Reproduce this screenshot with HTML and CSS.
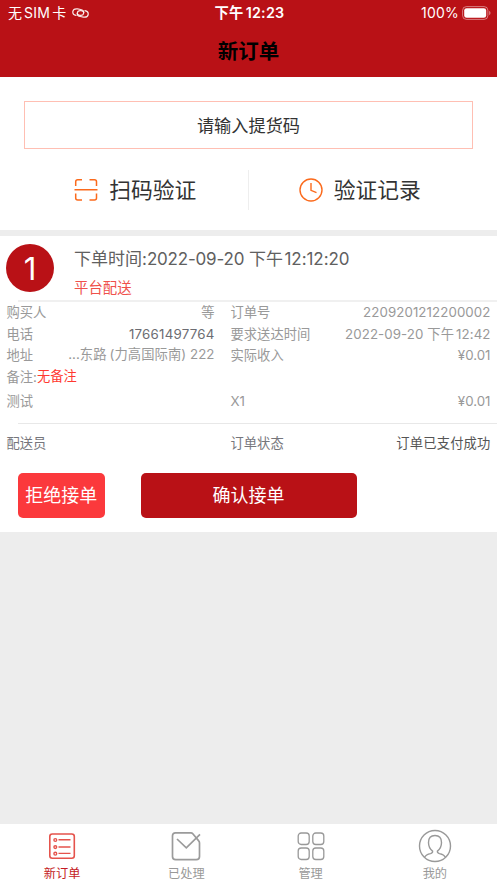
FILE: index.html
```html
<!DOCTYPE html>
<html lang="zh-CN">
<head>
<meta charset="utf-8">
<title>新订单</title>
<link rel="stylesheet" href="styles.css">
</head>
<body>
<div class="app">
  <header class="header">
    <div class="status">
      <div class="carrier"><span class="carrier-name">无<span class="sim">SIM</span>卡</span>
        <svg class="link" viewBox="0 0 17 12" fill="none" stroke="#fff" stroke-opacity=".9" stroke-width="1.200" stroke-linecap="round"><path d="M4 8.300C1.800 7.900.6 6.500.8 4.700 1.100 2.500 3.200 1.600 5.600 1.900L8.700 2.500c2.200.4 3.300 1.800 3 3.500-.3 1.800-1.900 2.600-3.900 2.300-1.500-.2-2.300-.9-2.500-1.700"/><path d="M13 3.700c2.200.4 3.400 1.800 3.200 3.600-.3 2.200-2.400 3.100-4.800 2.800L8.300 9.500C6.100 9.100 5 7.700 5.300 6c.3-1.800 1.900-2.600 3.900-2.300 1.500.2 2.300.9 2.500 1.700"/></svg>
      </div>
      <div class="time">下午<span class="clock">12:23</span></div>
      <div class="power"><span>100%</span>
        <svg class="battery" viewBox="0 0 29 14"><rect x=".6" y=".6" width="25.3" height="12.8" rx="3.8" fill="none" stroke="#fff" stroke-opacity=".45" stroke-width="1"/><rect x="2.2" y="2.2" width="22" height="9.6" rx="2.4" fill="#fff"/><path d="M27.2 4.8q1.3.8 1.3 2.2t-1.3 2.2z" fill="#fff" fill-opacity=".5"/></svg>
      </div>
    </div>
    <h1 class="title">新订单</h1>
  </header>

  <section class="verify">
    <div class="code-input">请输入提货码</div>
    <div class="actions">
      <div class="action">
        <svg class="action-icon" viewBox="0 0 24 24" fill="none" stroke="#fb6a1c" stroke-width="1.500"><path d="M1.700 8V3.700q0-2 2-2H8M15.500 1.700h5q2 0 2 2V8M1.700 15.500v4.500q0 2 2 2H8M15.500 22h5q2 0 2-2v-4.500M.5 11.700h23"/></svg>
        <span>扫码验证</span>
      </div>
      <div class="action action-log">
        <svg class="action-icon" viewBox="0 0 24 24" fill="none" stroke="#fb6a1c" stroke-width="1.400"><circle cx="12" cy="12" r="11"/><path d="M12 5v7.400l5.500 2.200"/></svg>
        <span>验证记录</span>
      </div>
    </div>
  </section>

  <article class="order">
    <div class="order-head">
      <div class="number">1</div>
      <div class="summary">
        <div class="placed">下单时间:<span class="date">2022-09-20</span> 下午<span class="clock">12:12:20</span></div>
        <div class="delivery">平台配送</div>
      </div>
    </div>
    <div class="rule thick"></div>
    <div class="details">
      <div class="col buyer">
        <div class="row"><span>购买人</span><span>等</span></div>
        <div class="row"><span>电话</span><span class="phone">17661497764</span></div>
        <div class="row"><span>地址</span><span class="address">...东路<span class="paren">(</span>力高国际南) 222</span></div>
        <div class="row note"><span>备注:</span><span class="warn">无备注</span></div>
      </div>
      <div class="col">
        <div class="row"><span>订单号</span><span class="digits">2209201212200002</span></div>
        <div class="row"><span>要求送达时间</span><span class="digits">2022-09-20 下午<span class="clock">12:42</span></span></div>
        <div class="row"><span>实际收入</span><span>¥0.01</span></div>
      </div>
    </div>
    <div class="item"><span class="left">测试</span><span>X1</span><span class="end">¥0.01</span></div>
    <div class="rule"></div>
    <div class="item courier"><span class="left">配送员</span><span>订单状态</span><span class="end dark">订单已支付成功</span></div>
    <div class="buttons">
      <button class="btn reject">拒绝接单</button>
      <button class="btn accept">确认接单</button>
    </div>
  </article>

  <nav class="tabs">
    <div class="tab active">
      <svg viewBox="0 0 34 34" fill="none" stroke="#e5534c" stroke-width="1.400"><rect x="4.800" y="5" width="24.500" height="24.200" rx="2.500" stroke-width="1.600"/><circle cx="10.300" cy="11" r="1.400"/><circle cx="10.300" cy="18.100" r="1.400"/><circle cx="10.300" cy="24.700" r="1.400"/><path d="M13.500 10.700h12M13.500 18h12M13.500 24.400h12"/></svg>
      <span>新订单</span>
    </div>
    <div class="tab">
      <svg viewBox="0 0 34 34" fill="none" stroke="#9b9b9b" stroke-width="1.700"><path d="M22 3.800H6.500q-3 0-3 3v20.700q0 3.200 3.200 3.200h20.600q3.200 0 3.200-3.200V14q0-1.200-.8-2.100L23.800 4.800q-.8-1-1.800-1z"/><path d="M8 10l9.300 8.800L31 5.300"/></svg>
      <span>已处理</span>
    </div>
    <div class="tab">
      <svg viewBox="0 0 34 34" fill="none" stroke="#999" stroke-width="1.300"><rect x="4.200" y="4" width="11" height="11.500" rx="3"/><rect x="18.800" y="4" width="11" height="11.500" rx="3"/><rect x="4.200" y="19" width="11" height="11.500" rx="3"/><rect x="18.800" y="19" width="11" height="11.500" rx="3"/></svg>
      <span>管理</span>
    </div>
    <div class="tab">
      <svg viewBox="0 0 34 34" fill="none" stroke="#999" stroke-width="1.400"><circle cx="17" cy="17" r="15.500"/><path d="M6.500 28.300c1.200-2.300 3.500-3.200 6-3.700 1.700-.4 2.300-.9 2.100-2.500-2.800-2-4.100-5-4.100-8.500 0-4.500 2-7.100 6.500-7.100s6.500 2.600 6.500 7.100c0 3.500-1.300 6.500-4.100 8.500-.2 1.600.4 2.100 2.100 2.500 2.500.5 4.800 1.400 6 3.700"/></svg>
      <span>我的</span>
    </div>
  </nav>
</div>
</body>
</html>
```

FILE: styles.css
```css
* { box-sizing: border-box; }
body {
  margin: 0;
  background: #ededed;
  font-family: Inter, "Noto Sans CJK SC", sans-serif;
  font-weight: 400;
}
.app { height: 883px; display: flex; flex-direction: column; white-space: nowrap; }
svg { display: block; flex: none; }
.clock { margin-left: 2px; }

.header { height: 77px; background: #b91116; flex: none; }
.status {
  height: 26px;
  padding: 0 6px 0 8px;
  display: grid;
  grid-template-columns: 1fr auto 1fr;
  align-items: center;
  color: #fff;
  font-size: 14px;
  line-height: 20px;
}
.carrier { display: flex; align-items: center; gap: 6px; }
.sim { margin: 0 2px; letter-spacing: .3px; }
.link { width: 17px; height: 12px; }
.time { font-weight: 600; font-size: 14.300px; letter-spacing: .25px; }
.power { display: flex; justify-content: flex-end; align-items: center; gap: 3px; letter-spacing: .2px; }
.battery { width: 29px; height: 14px; }
.title {
  margin: 0;
  padding-top: 11px;
  font-size: 20.500px;
  line-height: 30px;
  font-weight: 700;
  text-align: center;
  color: #000;
}

.verify { height: 153px; background: #fff; padding: 24px 24px 0; flex: none; }
.code-input {
  height: 48px;
  border: 1px solid #ffbfb3;
  font-size: 17.200px;
  line-height: 47px;
  text-align: center;
  color: #333;
}
.actions { display: grid; grid-template-columns: 1fr 1fr; margin: 21px 1px 0 -1px; height: 40px; }
.action {
  display: flex;
  align-items: center;
  justify-content: center;
  gap: 11px;
  font-size: 21.800px;
  line-height: 32px;
  color: #333;
}
.action-log { border-left: 1px solid #eee; padding-right: 1px; }
.action-icon { width: 24px; height: 24px; }

.order { margin-top: 6px; height: 296px; background: #fff; color: #999; font-size: 13.300px; line-height: 20px; flex: none; }
.order-head { display: flex; gap: 20px; height: 64px; padding: 8px 6px 0; }
.number {
  width: 48px;
  height: 48px;
  border-radius: 50%;
  background: #b91116;
  color: #fff;
  font-size: 31px;
  line-height: 49px;
  text-align: center;
}
.placed { font-size: 17px; line-height: 26px; margin-top: 2px; color: #606060; }
.date { letter-spacing: -.2px; }
.placed .clock { letter-spacing: -.05px; margin-left: 1.500px; }
.delivery { font-size: 14.400px; line-height: 22px; margin-top: 5px; color: #ef514b; }
.rule { height: 1px; margin-left: 18px; background: #e8e8e8; }
.rule.thick { height: 2px; background: #f0f0f0; }
.details { display: grid; grid-template-columns: 208px 260px; gap: 16px; padding-left: 6.500px; }
.row { display: flex; justify-content: space-between; height: 21.600px; line-height: 21px; }
.phone { color: #6c6c72; letter-spacing: .22px; }
.digits { letter-spacing: .08px; }
.address { line-height: 19px; letter-spacing: .06px; }
.paren { margin-left: 3px; }
.row.note { justify-content: flex-start; }
.warn { color: #ff3930; line-height: 19px; }
.item { display: grid; grid-template-columns: 224px 80px 180px; padding-left: 6.500px; height: 35px; line-height: 26px; }
.end { text-align: right; }
.courier { height: 48.500px; line-height: 38px; color: #76767c; }
.dark { color: #555; letter-spacing: .15px; }
.buttons { display: flex; gap: 36px; padding-left: 18px; }
.btn {
  height: 45px;
  border: 0;
  padding: 0;
  border-radius: 5px;
  color: #fff;
  font: 400 18px/45px Inter, "Noto Sans CJK SC", sans-serif;
}
.reject { width: 86.500px; background: #fb393c; }
.accept { width: 216px; background: #b91116; }

.tabs { margin-top: auto; height: 59px; background: #fff; display: grid; grid-template-columns: repeat(4, 1fr); flex: none; }
.tab { display: flex; flex-direction: column; align-items: center; padding-top: 5px; font-size: 12.200px; line-height: 18px; color: #999; }
.tab svg { width: 34px; height: 34px; margin-bottom: 2px; }
.tab.active { color: #c41b24; }
```
